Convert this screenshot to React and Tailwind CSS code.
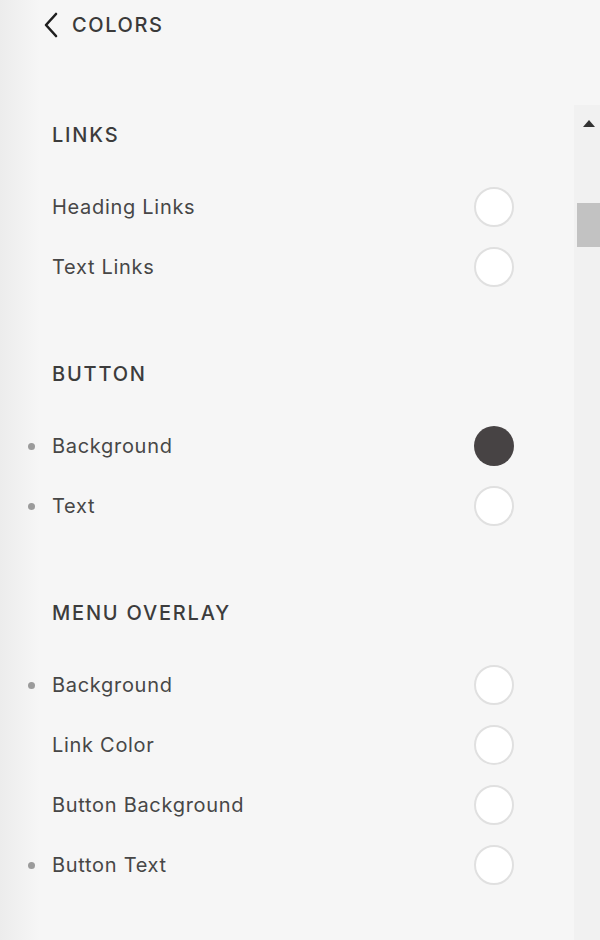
import React from "react";

const sections = [
  {
    title: "LINKS",
    items: [
      { label: "Heading Links", dot: false, fill: false },
      { label: "Text Links", dot: false, fill: false },
    ],
  },
  {
    title: "BUTTON",
    items: [
      { label: "Background", dot: true, fill: true },
      { label: "Text", dot: true, fill: false },
    ],
  },
  {
    title: "MENU OVERLAY",
    items: [
      { label: "Background", dot: true, fill: false },
      { label: "Link Color", dot: false, fill: false },
      { label: "Button Background", dot: false, fill: false },
      { label: "Button Text", dot: true, fill: false },
    ],
  },
];

function Row({ label, dot, fill }) {
  return (
    <div className="h-[60px] flex items-center pl-[28px]">
      <span
        className={
          dot
            ? "w-[7px] h-[7px] rounded-full bg-[#9b9b9b] mr-[17px]"
            : "w-[7px] h-[7px] mr-[17px]"
        }
      />
      <span className="flex-1 text-[20px] tracking-[0.035em] text-[#474747] leading-none">{label}</span>
      {fill ? (
        <span className="w-[40px] h-[40px] rounded-full bg-[#474344]" />
      ) : (
        <span className="w-[40px] h-[40px] rounded-full bg-white border-2 border-[#e0e0e0]" />
      )}
    </div>
  );
}

export default function App() {
  return (
    <div
      className="w-[600px] h-[940px] flex overflow-hidden bg-[linear-gradient(to_right,#ececec,#f6f6f6_40px)]"
      style={{ fontFamily: "Inter, 'Noto Sans', sans-serif" }}
    >
      <div className="flex-1 pr-[60px]">
        <div className="h-[50px] flex items-center pl-[42px] gap-[12px]">
          <svg width="18" height="26" viewBox="0 0 18 26" fill="none">
            <path d="M14 2 L4 13 L14 24" stroke="#1e1e1e" strokeWidth="2.6" strokeLinecap="round" strokeLinejoin="round" />
          </svg>
          <span className="text-[20px] font-medium tracking-[0.08em] text-[#3a3a3a]">COLORS</span>
        </div>
        {sections.map((s, i) => (
          <div key={s.title} className={i === 0 ? "mt-[73px]" : "mt-[65px]"}>
            <div className="h-[24px] flex items-center pl-[52px] mb-[30px] text-[20px] font-medium tracking-[0.09em] text-[#3c3c3c]">
              {s.title}
            </div>
            {s.items.map((it, j) => (
              <Row key={j} {...it} />
            ))}
          </div>
        ))}
      </div>
      <div className="w-[26px] mt-[105px] bg-[#f1f1f1] flex flex-col items-end">
        <div className="h-[36px] w-full flex items-center justify-center pl-[4px]">
          <svg width="12" height="7" viewBox="0 0 12 7">
            <path d="M0 7 L6 0 L12 7 Z" fill="#333" />
          </svg>
        </div>
        <div className="mt-[62px] w-[23px] h-[44px] bg-[#c2c2c2]" />
      </div>
    </div>
  );
}
